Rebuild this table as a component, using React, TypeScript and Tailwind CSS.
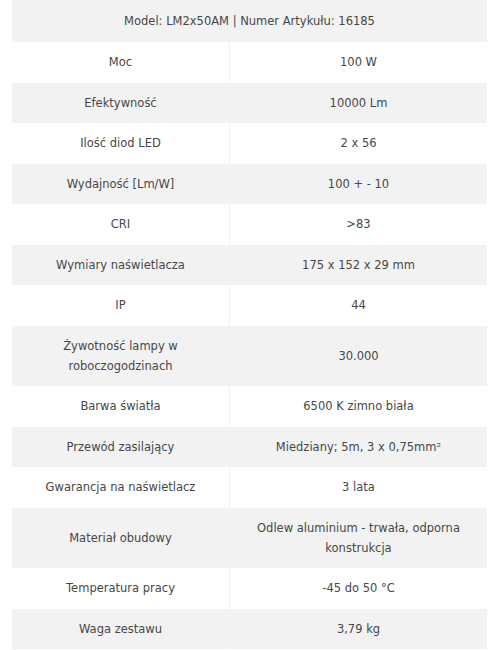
import React from "react";

const rows: [string, string][] = [
  ["Moc", "100 W"],
  ["Efektywność", "10000 Lm"],
  ["Ilość diod LED", "2 x 56"],
  ["Wydajność [Lm/W]", "100 + - 10"],
  ["CRI", ">83"],
  ["Wymiary naświetlacza", "175 x 152 x 29 mm"],
  ["IP", "44"],
  ["Żywotność lampy w\nroboczogodzinach", "30.000"],
  ["Barwa światła", "6500 K zimno biała"],
  ["Przewód zasilający", "Miedziany; 5m, 3 x 0,75mm²"],
  ["Gwarancja na naświetlacz", "3 lata"],
  ["Materiał obudowy", "Odlew aluminium - trwała, odporna\nkonstrukcja"],
  ["Temperatura pracy", "-45 do 50 °C"],
  ["Waga zestawu", "3,79 kg"],
];

export default function App() {
  return (
    <div className="w-[500px] h-[650px] bg-white pl-[12px] pr-[13px] overflow-hidden" style={{ fontFamily: '"DejaVu Sans", Verdana, sans-serif' }}>
      <div className="text-[11.5px] text-[#474747] leading-[20px]">
        <div className="bg-[#f2f2f2] py-[11px] text-center">Model: LM2x50AM | Numer Artykułu: 16185</div>
        {rows.map(([k, v], i) => (
          <div key={i} className={`flex ${i % 2 === 1 ? "bg-[#f2f2f2]" : "bg-white"}`}>
            <div className={`w-[218px] shrink-0 py-[10.25px] px-2 flex items-center justify-center text-center whitespace-pre-line border-r ${i % 2 === 1 ? "border-[#f4f4f4]" : "border-[#f2f2f2]"}`}>{k}</div>
            <div className="flex-1 py-[10.25px] px-2 flex items-center justify-center text-center whitespace-pre-line">{v}</div>
          </div>
        ))}
      </div>
    </div>
  );
}
